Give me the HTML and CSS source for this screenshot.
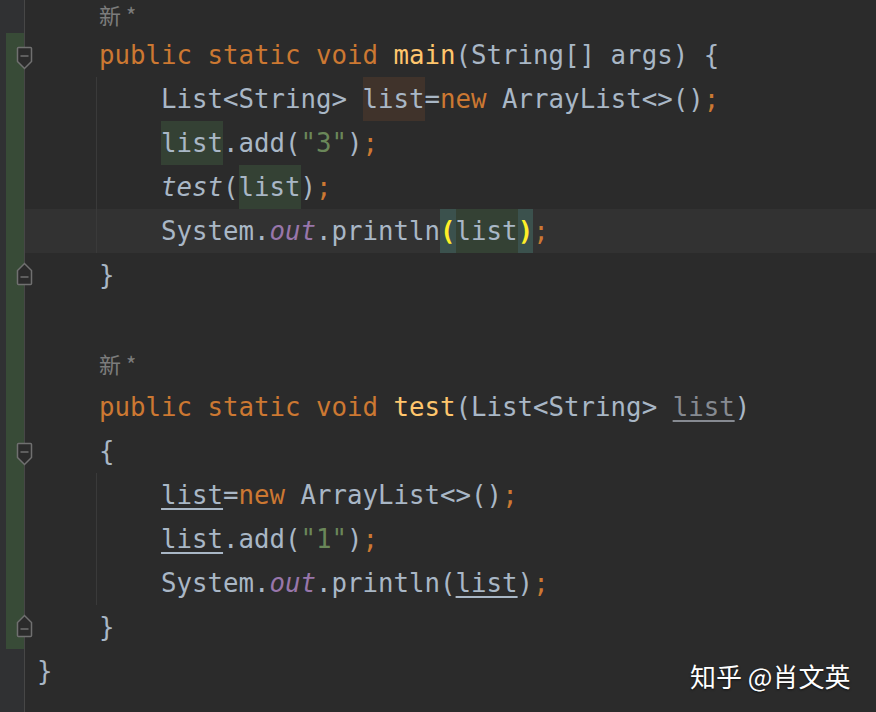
FILE: index.html
```html
<!DOCTYPE html>
<html lang="zh">
<head>
<meta charset="utf-8">
<title>Editor</title>
<link rel="stylesheet" href="styles.css">
</head>
<body>
<div class="editor">
  <div class="row first"><div class="gutter"></div><div class="code">    <span class="inlay">新 *</span></div></div>
  <div class="row"><div class="gutter changed"><svg class="fold fold-down" width="17" height="24" viewBox="0 0 17 24"><path d="M1.5 2.5 Q1.5 1.5 2.5 1.5 H14.5 Q15.5 1.5 15.5 2.5 V15.5 L8.5 22.5 L1.5 15.5 Z" fill="#2b2b2b" stroke="#707070" stroke-width="1.5"/><path d="M4.5 10 H12.5" stroke="#707070" stroke-width="1.5"/></svg></div><div class="code">    <span class="kw">public static void </span><span class="fn">main</span>(String[] args) {</div></div>
  <div class="row"><div class="gutter changed"></div><div class="code guide">        List&lt;String&gt; <span class="hl w">list</span>=<span class="kw">new</span> ArrayList&lt;&gt;()<span class="kw">;</span></div></div>
  <div class="row"><div class="gutter changed"></div><div class="code guide">        <span class="hl r">list</span>.add(<span class="str">"3"</span>)<span class="kw">;</span></div></div>
  <div class="row"><div class="gutter changed"></div><div class="code guide">        <span class="it">test</span>(<span class="hl r">list</span>)<span class="kw">;</span></div></div>
  <div class="row current"><div class="gutter changed"></div><div class="code guide">        System.<span class="field">out</span>.println<span class="hl bm">(</span><span class="hl r">list</span><span class="hl bm">)</span><span class="kw">;</span></div></div>
  <div class="row"><div class="gutter changed"><svg class="fold fold-up" width="17" height="24" viewBox="0 0 17 24"><path d="M1.5 21.5 Q1.5 22.5 2.5 22.5 H14.5 Q15.5 22.5 15.5 21.5 V8.5 L8.5 1.5 L1.5 8.5 Z" fill="#2b2b2b" stroke="#707070" stroke-width="1.5"/><path d="M4.5 15 H12.5" stroke="#707070" stroke-width="1.5"/></svg></div><div class="code">    }</div></div>
  <div class="row"><div class="gutter changed"></div><div class="code"></div></div>
  <div class="row"><div class="gutter changed"></div><div class="code">    <span class="inlay">新 *</span></div></div>
  <div class="row"><div class="gutter changed"></div><div class="code">    <span class="kw">public static void </span><span class="fn">test</span>(List&lt;String&gt; <span class="param">list</span>)</div></div>
  <div class="row"><div class="gutter changed"><svg class="fold fold-down" width="17" height="24" viewBox="0 0 17 24"><path d="M1.5 2.5 Q1.5 1.5 2.5 1.5 H14.5 Q15.5 1.5 15.5 2.5 V15.5 L8.5 22.5 L1.5 15.5 Z" fill="#2b2b2b" stroke="#707070" stroke-width="1.5"/><path d="M4.5 10 H12.5" stroke="#707070" stroke-width="1.5"/></svg></div><div class="code">    {</div></div>
  <div class="row"><div class="gutter changed"></div><div class="code guide">        <span class="re">list</span>=<span class="kw">new</span> ArrayList&lt;&gt;()<span class="kw">;</span></div></div>
  <div class="row"><div class="gutter changed"></div><div class="code guide">        <span class="re">list</span>.add(<span class="str">"1"</span>)<span class="kw">;</span></div></div>
  <div class="row"><div class="gutter changed"></div><div class="code guide">        System.<span class="field">out</span>.println(<span class="re">list</span>)<span class="kw">;</span></div></div>
  <div class="row"><div class="gutter changed"><svg class="fold fold-up" width="17" height="24" viewBox="0 0 17 24"><path d="M1.5 21.5 Q1.5 22.5 2.5 22.5 H14.5 Q15.5 22.5 15.5 21.5 V8.5 L8.5 1.5 L1.5 8.5 Z" fill="#2b2b2b" stroke="#707070" stroke-width="1.5"/><path d="M4.5 15 H12.5" stroke="#707070" stroke-width="1.5"/></svg></div><div class="code">    }</div></div>
  <div class="row"><div class="gutter"></div><div class="code">}</div></div>
  <div class="row"><div class="gutter"></div><div class="code"></div></div>
</div>
<div class="watermark">知乎 @肖文英</div>
</body>
</html>
```
FILE: styles.css
```css
html, body {
  margin: 0;
  padding: 0;
  background: #2b2b2b;
  overflow: hidden;
  height: 100%;
}
body {
  position: relative;
}
.editor {
  display: flex;
  flex-direction: column;
}
.row {
  display: flex;
  height: 44px;
  flex: none;
}
.row.first {
  height: 33px;
}
.row.first .code {
  line-height: 26px;
}
.row.first .inlay {
  display: inline-block;
  vertical-align: top;
  line-height: 26px;
  padding-top: 1px;
}
.gutter {
  width: 24px;
  flex: none;
  background: #303133;
  border-right: 1px solid #474747;
  position: relative;
}
.gutter.changed {
  background: linear-gradient(to right, #303133 6px, #384b37 6px);
}
.fold {
  position: absolute;
  left: 16px;
  display: block;
}
.fold-down { top: 13px; }
.fold-up { top: 9px; }
.code {
  flex: 1;
  padding-left: 12px;
  white-space: pre;
  font-family: "DejaVu Sans Mono", monospace;
  font-size: 25.75px;
  line-height: 44px;
  color: #a9b7c6;
}
.code.guide {
  background-image: linear-gradient(#3a3a3a, #3a3a3a);
  background-repeat: no-repeat;
  background-position: 71px 0;
  background-size: 1px 100%;
}
.row.current .code {
  background-color: #323232;
}
.kw { color: #cc7832; }
.fn { color: #ffc66d; }
.str { color: #6a8759; }
.field { color: #9876aa; font-style: italic; }
.it { font-style: italic; }
.hl { display: inline-block; }
.w { background: #40332b; }
.r { background: #344134; }
.bm { background: #3b514d; color: #ffef28; font-weight: bold; }
.re {
  text-decoration: underline;
  text-decoration-thickness: 2px;
  text-underline-offset: 4px;
}
.param {
  color: #868a91;
  text-decoration: underline;
  text-decoration-thickness: 2px;
  text-underline-offset: 4px;
}
.inlay {
  font-family: "Noto Sans CJK SC", sans-serif;
  font-size: 22px;
  color: #7c7c7c;
}
.watermark {
  position: absolute;
  left: 690px;
  top: 657px;
  font-family: "Noto Sans CJK SC", sans-serif;
  font-size: 26px;
  line-height: 38px;
  color: #ffffff;
  text-shadow: 0 1px 2px rgba(0, 0, 0, 0.6);
}
```
